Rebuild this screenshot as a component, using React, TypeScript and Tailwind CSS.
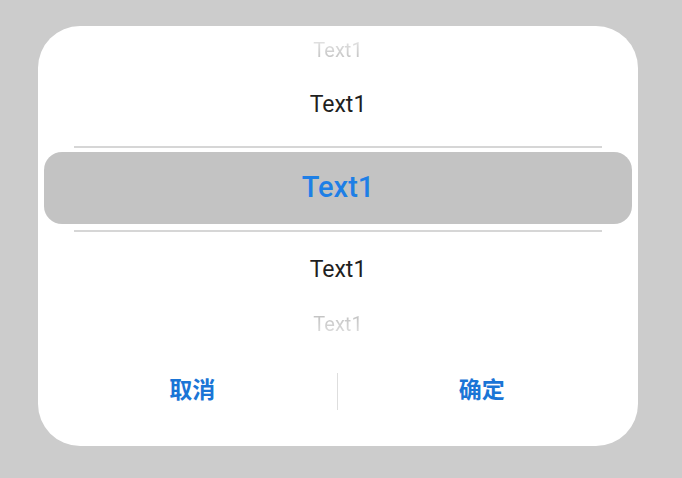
export default function App() {
  return (
    <div className="min-h-screen w-full bg-[#cccccc] pt-[26px] pl-[38px] font-['Roboto','Noto_Sans_CJK_SC',sans-serif]">
      <div className="flex w-[600px] flex-col rounded-[42px] bg-white pb-[36px]">
        <div className="flex h-[48px] items-center justify-center">
          <span className="bg-linear-to-b from-[#ececec] to-[#bababa] bg-clip-text text-[20px] text-transparent">
            Text1
          </span>
        </div>
        <div className="flex h-[62px] items-center justify-center text-[23px] text-[#1f1f1f]">
          Text1
        </div>
        <div className="mx-[36px] mt-[10px] h-[2px] bg-[#d6d6d6]" />
        <div className="mx-[6px] mt-[4px] flex h-[72px] items-center justify-center rounded-[18px] bg-[#c3c3c3] text-[29px] font-medium text-[#1e7fe6]">
          Text1
        </div>
        <div className="mx-[36px] mt-[6px] h-[2px] bg-[#d6d6d6]" />
        <div className="flex h-[76px] items-center justify-center text-[23px] text-[#1f1f1f]">
          Text1
        </div>
        <div className="flex h-[32px] items-center justify-center">
          <span className="bg-linear-to-b from-[#bababa] to-[#e4e4e4] bg-clip-text text-[20px] text-transparent">
            Text1
          </span>
        </div>
        <div className="mt-[33px] flex h-[37px] items-stretch">
          <button className="flex flex-1 items-center justify-center pl-[10px] text-[23px] font-semibold text-[#1a75d6]">
            取消
          </button>
          <div className="w-px bg-[#dedede]" />
          <button className="flex flex-1 items-center justify-center pr-[12px] text-[23px] font-semibold text-[#1a75d6]">
            确定
          </button>
        </div>
      </div>
    </div>
  );
}
